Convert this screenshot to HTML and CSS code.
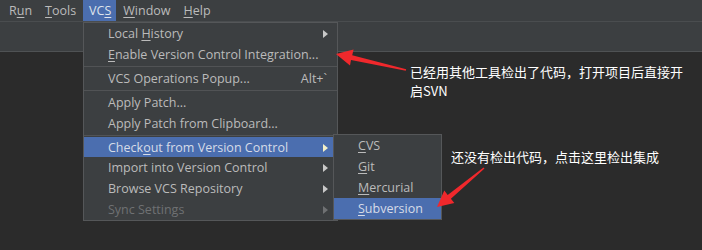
FILE: index.html
```html
<!DOCTYPE html>
<html>
<head>
	<meta charset="utf-8">
	<title>VCS menu</title>
	<link rel="stylesheet" href="styles.css">
</head>
<body>

<div class="ide">
	<!-- barra de menu -->
	<div class="menubar">
		<span class="menubar-item">R<u>u</u>n</span>
		<span class="menubar-item"><u>T</u>ools</span>
		<span class="menubar-item active">VC<u>S</u></span>
		<span class="menubar-item"><u>W</u>indow</span>
		<span class="menubar-item"><u>H</u>elp</span>
	</div>
	<div class="toolbar"></div>
	<div class="editor"></div>

	<!-- menu VCS aberto -->
	<div class="menu vcs-menu">
		<div class="menu-item has-sub"><span>Local <u>H</u>istory</span></div>
		<div class="menu-item"><span><u>E</u>nable Version Control Integration...</span></div>
		<div class="menu-sep"></div>
		<div class="menu-item"><span>VCS Operations Popup...</span> <span class="shortcut">Alt+`</span></div>
		<div class="menu-sep"></div>
		<div class="menu-item"><span>Apply Patch...</span></div>
		<div class="menu-item"><span>Apply Patch from Clipboard...</span></div>
		<div class="menu-sep"></div>
		<div class="menu-item has-sub selected"><span>Check<u>o</u>ut from Version Control</span></div>
		<div class="menu-item has-sub"><span>Import into Version Control</span></div>
		<div class="menu-item has-sub"><span>Browse VCS Repository</span></div>
		<div class="menu-item has-sub disabled"><span>Sync Settings</span></div>
	</div>

	<div class="menu sub-menu">
		<div class="menu-item"><span><u>C</u>VS</span></div>
		<div class="menu-item"><span><u>G</u>it</span></div>
		<div class="menu-item"><span><u>M</u>ercurial</span></div>
		<div class="menu-item selected"><span><u>S</u>ubversion</span></div>
	</div>

	<!-- anotacoes -->
	<svg class="arrows" width="702" height="250" viewBox="0 0 702 250">
		<polygon points="406.2,69.3 352.2,55.2 353.6,49.6 336,54 350.0,65.4 351.0,60.0 405.8,70.7" fill="#f0282c"/>
		<polygon points="484.5,168.5 450.9,198.7 454.3,203 437,207 444.3,190.6 447.7,194.9 483.5,167.5" fill="#f0282c"/>
	</svg>

	<p class="note note-1">已经用其他工具检出了代码，打开项目后直接开<br>启SVN</p>
	<p class="note note-2">还没有检出代码，点击这里检出集成</p>
</div>

</body>
</html>
```

FILE: styles.css
```css
body {
	margin: 0;
	background-color: #2b2b2b;
	font-family: "Open Sans", "Noto Sans", sans-serif;
	font-size: 12.5px;
	color: #bbbbbb;
}

u {
	text-decoration: underline;
	text-underline-offset: 2px;
}

.ide {
	position: relative;
	width: 702px;
	height: 250px;
	overflow: hidden;
}

.menubar {
	display: flex;
	height: 22px;
	padding-left: 3px;
	background-color: #3c3f41;
	border-bottom: 1px solid #4a4d4f;
	box-sizing: border-box;
}

.menubar-item {
	display: flex;
	align-items: center;
	padding: 0 6px;
	margin-right: 1px;
	line-height: 22px;
}

.menubar-item.active {
	background-color: #4b6eaf;
	color: #dfe4ec;
	padding: 0 5px 0 6px;
}

.toolbar {
	height: 29px;
	background-color: #3c3f41;
	border-bottom: 1px solid #4f5254;
}

.editor {
	height: 200px;
	background-color: #2b2b2b;
}

.menu {
	position: absolute;
	background-color: #3c3f41;
	border: 1px solid #555759;
}

.vcs-menu {
	left: 83px;
	top: 22px;
	width: 253px;
}

.sub-menu {
	left: 333px;
	top: 134px;
	width: 107px;
}

.menu-item {
	position: relative;
	display: flex;
	align-items: center;
	height: 21px;
	padding-left: 24px;
	white-space: nowrap;
}

.menu-item.selected {
	background-color: #4b6eaf;
	color: #d6dce8;
}

.vcs-menu .menu-item.selected {
	height: 20px;
}

.menu-item.disabled {
	color: #6f7173;
}

.has-sub::after {
	content: "";
	position: absolute;
	right: 9px;
	top: 7px;
	border-left: 5px solid #c8c8c8;
	border-top: 4px solid transparent;
	border-bottom: 4px solid transparent;
}

.selected.has-sub::after {
	border-left-color: #f4f0c8;
}

.disabled.has-sub::after {
	border-left-color: #6f7173;
}

.shortcut {
	margin-left: auto;
	margin-right: 10px;
}

.menu-sep {
	height: 1px;
	margin: 1px 0 1px;
	background-color: #515355;
}

.arrows {
	position: absolute;
	left: 0;
	top: 0;
	pointer-events: none;
}

.note {
	position: absolute;
	margin: 0;
	font-family: "Noto Sans CJK SC", "Open Sans", sans-serif;
	font-size: 13px;
	line-height: 19px;
	color: #ffffff;
}

.note-1 {
	left: 410px;
	top: 62px;
}

.note-2 {
	left: 451px;
	top: 147px;
}
```
